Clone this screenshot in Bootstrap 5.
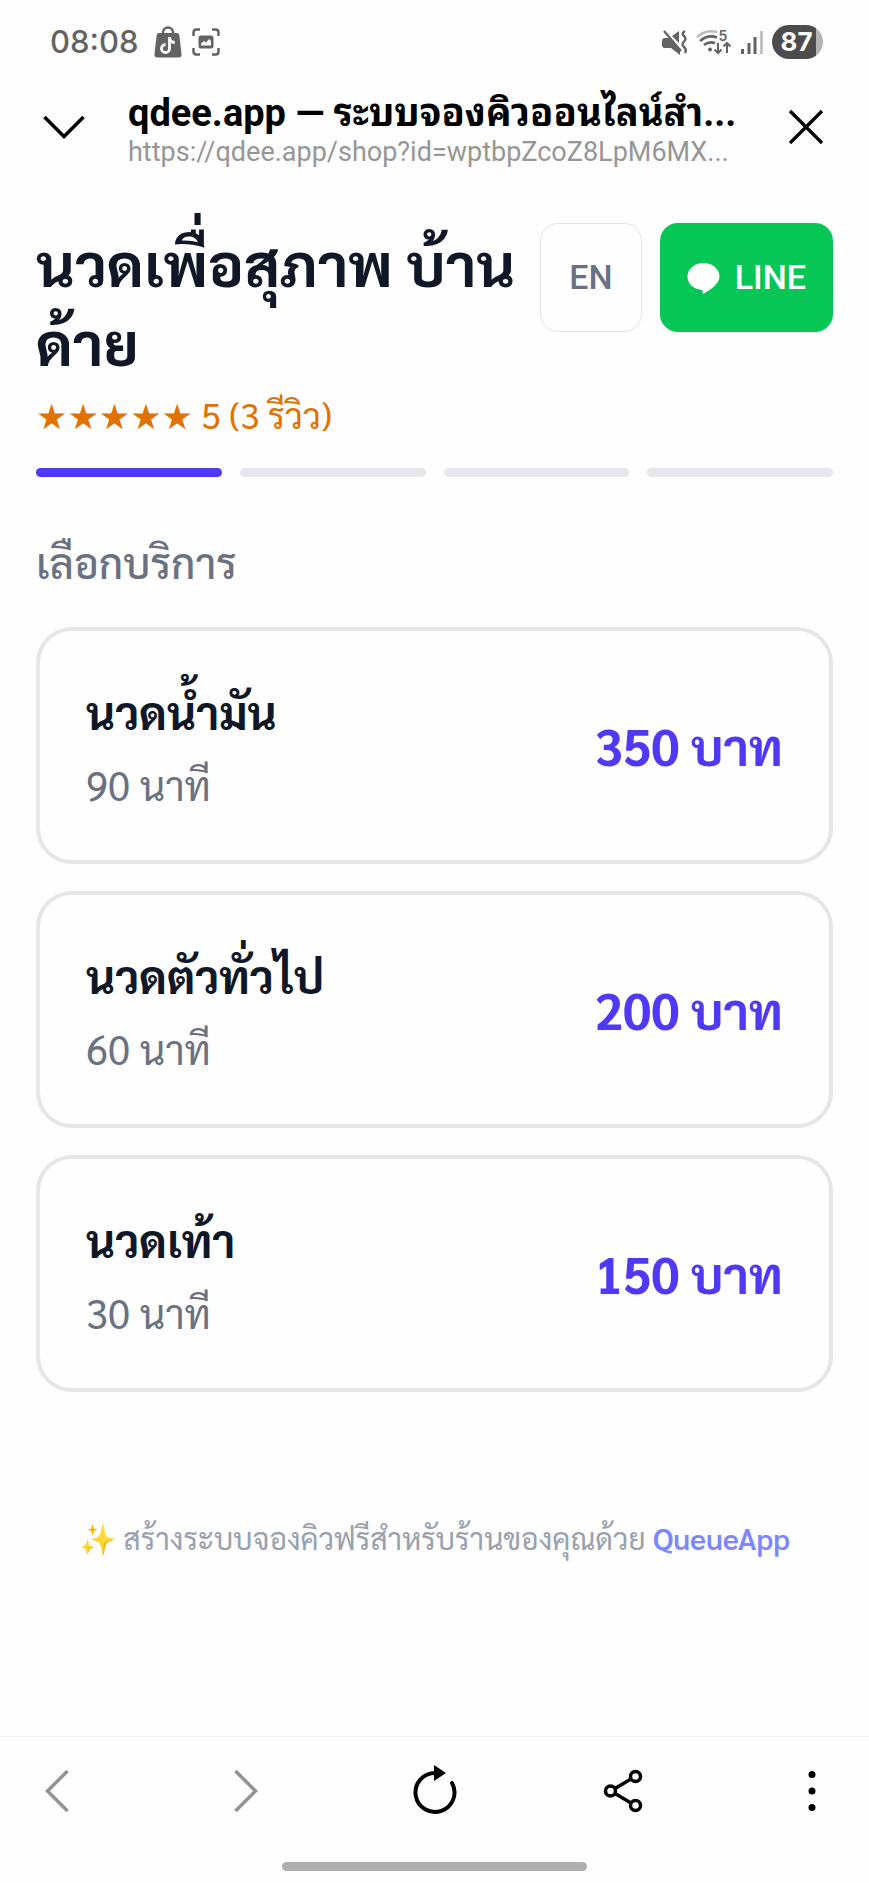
<!DOCTYPE html>
<html lang="th">
<head>
<meta charset="utf-8">
<meta name="viewport" content="width=device-width, initial-scale=1">
<title>qdee.app — ระบบจองคิวออนไลน์</title>
<link href="https://cdn.jsdelivr.net/npm/bootstrap@5.3.0/dist/css/bootstrap.min.css" rel="stylesheet">
<style>
  body { font-family: Sarabun, "Noto Sans Thai Looped", "Noto Sans", sans-serif; background: #fefefe; color: #101828; }
  svg { display: block; flex: none; overflow: visible; }

  .status-bar { padding: 23px 46px 0 50px; color: #636363; }
  .status-left { gap: 10px; }
  .status-right { gap: 9px; }
  .clock { margin-right: 6px; font: 500 31px/38px Inter, sans-serif; }
  .battery { width: 51px; height: 34px; padding-right: 2px; border-radius: 17px; background: linear-gradient(90deg, #4c4c4c 44px, #b4b4b4 44px); color: #fff; font: 700 26px/34px Inter, sans-serif; }

  .browser-bar { padding: 26px 39px 0 40px; gap: 40px; }
  .icon-btn { display: flex; align-items: center; justify-content: center; border: 0; background: none; padding: 0; color: #000; width: 48px; height: 48px; }
  .icon-btn:disabled { color: #929292; }
  .tab-info { padding-top: 3px; font-family: Roboto, "Noto Sans Thai Looped", "Noto Sans", sans-serif; min-width: 0; }
  .tab-title { font-size: 38px; line-height: 46px; color: #000; }
  .tab-url { font-size: 27px; line-height: 32px; color: #969696; }

  .shop { padding: 55px 36px 0; }
  .shop-name { font-size: 60px; line-height: 79px; }
  .head-btn { height: 109px; border-radius: 18px; font-size: 34px; font-weight: 500; font-family: Roboto, sans-serif; }
  .lang-btn { padding: 0 28px; border: 1px solid #e5e5e5; color: #6a7282; background: #fefefe; }
  .line-btn { padding: 0 27px; gap: 15px; background: #06c755; color: #fff; border: 0; }
  .rating { margin-top: 7px; color: #e17100; font-size: 35px; line-height: 54px; }
  .stars { font-family: "DejaVu Sans", sans-serif; font-size: 35px; }
  .steps { gap: 18px; }
  .step { height: 9px; border-radius: 5px; background: #e5e7eb; }
  .step.done { background: #4f39f6; }
  .section-title { margin: 55px 0 35px; font-size: 42px; line-height: 60px; color: #6a7282; }
  .services { gap: 27px; }
  .service { min-height: 237px; border: 4px solid #e6e6e6; border-radius: 36px; background: #fefefe; padding: 0 46px; color: inherit; }
  .service-info { padding-top: 4px; }
  .service-name { font-size: 45px; line-height: 73px; }
  .service-time { font-size: 40px; line-height: 73px; color: #6a7282; }
  .service-price { font-size: 50px; line-height: 72px; color: #4f39f6; }
  .made-with { margin-top: 122px; font-size: 30px; line-height: 48px; color: #99a1af; }
  .made-with a { color: #7c86ff; }

  .bottom-bar { border-top: 1px solid #f3f3f3; padding: 30px 33px 12px; }
  .home-pill { width: 38%; height: 9px; margin-top: 47px; border-radius: 5px; background: #aeaeae; }
</style>
</head>
<body class="d-flex flex-column min-vh-100">
<header>
  <div class="status-bar d-flex align-items-center justify-content-between">
    <div class="status-left d-flex align-items-center">
      <div class="clock">08:08</div>
      <svg width="28" height="32" viewBox="0 0 28 32" aria-hidden="true">
        <path d="M9 8V6.500a5 5 0 0 1 10 0V8" fill="none" stroke="#636363" stroke-width="2.500"/>
        <path d="M5 7h18q2 0 2.300 2l2.200 19q.3 3.500-3 3.500H3.500q-3.300 0-3-3.500L2.700 9Q3 7 5 7z" fill="#636363"/>
        <path d="M15.500 11v11.500a4 4 0 1 1-4-4M15.500 12q.5 4 5.200 4.500" fill="none" stroke="#fff" stroke-width="2.800"/>
      </svg>
      <svg width="28" height="28" viewBox="0 0 28 28" aria-hidden="true">
        <path d="M1.500 8V4.500q0-3 3-3H8M20 1.500h3.500q3 0 3 3V8M26.500 20v3.500q0 3-3 3H20M8 26.500H4.500q-3 0-3-3V20" fill="none" stroke="#636363" stroke-width="2.500"/>
        <rect x="6.500" y="7.500" width="15" height="13" rx="2.500" fill="#636363"/>
        <path d="M9 17.500v-2l3-2.500 2 1.500 3-3.500 2 2v4.500z" fill="#fff"/>
      </svg>
    </div>
    <div class="status-right d-flex align-items-center">
      <svg width="25" height="25" viewBox="0 0 25 25" aria-hidden="true">
        <path d="M0 11q0-3 3-3h4l11 12v5l-9-7H3q-3 0-3-3zM10 6l7-5v12z" fill="#636363"/>
        <path d="M2 1l17 20" stroke="#636363" stroke-width="2.200"/>
        <path d="M23 1q-4 2.500-1 5t0 5.500 0 5.500 1 6" fill="none" stroke="#636363" stroke-width="2.400"/>
      </svg>
      <svg width="36" height="30" viewBox="0 -2 36 30" aria-hidden="true">
        <path d="M1 8Q10 0 21 3" fill="none" stroke="#bbb" stroke-width="2.400"/>
        <path d="M4 12Q12 5 21 8.500M8 16q5-4 11-2" fill="none" stroke="#636363" stroke-width="2.600"/>
        <circle cx="14" cy="20.500" r="2" fill="#636363"/>
        <path d="M22 14v10M18.500 20.500l3.500 3.500 3.500-3.500M31 24V14M27.500 17.500 31 14l3.500 3.500" fill="none" stroke="#636363" stroke-width="2"/>
        <text x="22.500" y="12" font-family="Inter, sans-serif" font-weight="600" font-size="14" fill="#636363">5</text>
      </svg>
      <svg width="22" height="24" viewBox="0 0 22 24" aria-hidden="true">
        <path d="M1.500 19v5M8 13v11M14 7v17" stroke="#636363" stroke-width="3"/>
        <path d="M20.500 1v23" stroke="#bbb" stroke-width="2.600"/>
      </svg>
      <div class="battery text-center">87</div>
    </div>
  </div>
  <div class="browser-bar d-flex align-items-center">
    <button type="button" class="icon-btn flex-shrink-0" aria-label="ย่อ">
      <svg width="42" height="25" viewBox="0 0 42 25"><path d="M1.500 2 21 21.500 40.500 2" fill="none" stroke="currentColor" stroke-width="3.500"/></svg>
    </button>
    <div class="tab-info flex-grow-1">
      <div class="tab-title fw-bold text-nowrap">qdee.app — ระบบจองคิวออนไลน์สำ...</div>
      <div class="tab-url text-nowrap">https://qdee.app/shop?id=wptbpZcoZ8LpM6MX...</div>
    </div>
    <button type="button" class="icon-btn flex-shrink-0" aria-label="ปิด">
      <svg width="36" height="36" viewBox="0 0 36 36"><path d="M2 1l32 32M34 1 2 33" fill="none" stroke="currentColor" stroke-width="3.300"/></svg>
    </button>
  </div>
</header>

<main class="shop">
  <div class="d-flex align-items-start">
    <h1 class="shop-name fw-bold flex-grow-1 mb-0">นวดเพื่อสุภาพ บ้าน<wbr>ด้าย</h1>
    <div class="steps d-flex flex-shrink-0 ms-4">
      <button type="button" class="head-btn lang-btn">EN</button>
      <button type="button" class="head-btn line-btn d-flex align-items-center">
        <svg width="33" height="32" viewBox="0 0 33 32" aria-hidden="true"><path d="M16.500 1C25.500 1 32.500 7 32.500 14.500c0 7-8 12.500-15.500 17q-1.500.5-1.500-1V28C7 27.500.5 22 .5 14.500.5 7 7.500 1 16.500 1z" fill="#fff"/></svg>
        LINE
      </button>
    </div>
  </div>
  <div class="rating"><span class="stars">★★★★★</span> 5 (3 รีวิว)</div>
  <div class="steps d-flex mt-4">
    <div class="step done flex-fill"></div>
    <div class="step flex-fill"></div>
    <div class="step flex-fill"></div>
    <div class="step flex-fill"></div>
  </div>

  <h2 class="section-title">เลือกบริการ</h2>
  <div class="services d-flex flex-column">
    <button type="button" class="service d-flex align-items-center justify-content-between text-start">
      <span class="service-info"><span class="service-name fw-bold d-block">นวดน้ำมัน</span><span class="service-time d-block">90 นาที</span></span>
      <span class="service-price fw-bold">350 บาท</span>
    </button>
    <button type="button" class="service d-flex align-items-center justify-content-between text-start">
      <span class="service-info"><span class="service-name fw-bold d-block">นวดตัวทั่วไป</span><span class="service-time d-block">60 นาที</span></span>
      <span class="service-price fw-bold">200 บาท</span>
    </button>
    <button type="button" class="service d-flex align-items-center justify-content-between text-start">
      <span class="service-info"><span class="service-name fw-bold d-block">นวดเท้า</span><span class="service-time d-block">30 นาที</span></span>
      <span class="service-price fw-bold">150 บาท</span>
    </button>
  </div>
  <p class="made-with text-center mb-0">✨ สร้างระบบจองคิวฟรีสำหรับร้านของคุณด้วย <a href="#" class="fw-semibold text-decoration-none">QueueApp</a></p>
</main>

<footer class="bottom-bar mt-auto">
  <nav class="d-flex justify-content-between" aria-label="เบราว์เซอร์">
    <button type="button" class="icon-btn" disabled aria-label="ย้อนกลับ">
      <svg width="24" height="44" viewBox="0 0 24 44"><path d="M22.500 2 2.500 22l20 20" fill="none" stroke="currentColor" stroke-width="3.500"/></svg>
    </button>
    <button type="button" class="icon-btn" disabled aria-label="ถัดไป">
      <svg width="24" height="44" viewBox="0 0 24 44"><path d="M1.500 2l20 20-20 20" fill="none" stroke="currentColor" stroke-width="3.500"/></svg>
    </button>
    <button type="button" class="icon-btn" aria-label="โหลดซ้ำ">
      <svg width="48" height="52" viewBox="0 0 48 52"><path d="M41 18A19.500 19.500 0 1 1 24 8" fill="none" stroke="currentColor" stroke-width="4" stroke-linecap="round"/><path d="M23 0l12 8-12 8z" fill="currentColor"/></svg>
    </button>
    <button type="button" class="icon-btn" aria-label="แชร์">
      <svg width="40" height="44" viewBox="0 0 40 44"><g fill="none" stroke="currentColor" stroke-width="3.500"><circle cx="7.500" cy="22" r="5"/><circle cx="32.500" cy="7.500" r="5"/><circle cx="32.500" cy="36.500" r="5"/><path d="M12 19.500 28 10M12 24.500 28 34"/></g></svg>
    </button>
    <button type="button" class="icon-btn" aria-label="เมนู">
      <svg width="8" height="42" viewBox="0 0 8 42" fill="currentColor"><circle cx="4" cy="4.500" r="3.500"/><circle cx="4" cy="21" r="3.500"/><circle cx="4" cy="37.500" r="3.500"/></svg>
    </button>
  </nav>
  <div class="home-pill mx-auto"></div>
</footer>
<script src="https://cdn.jsdelivr.net/npm/bootstrap@5.3.0/dist/js/bootstrap.bundle.min.js"></script>
</body>
</html>
